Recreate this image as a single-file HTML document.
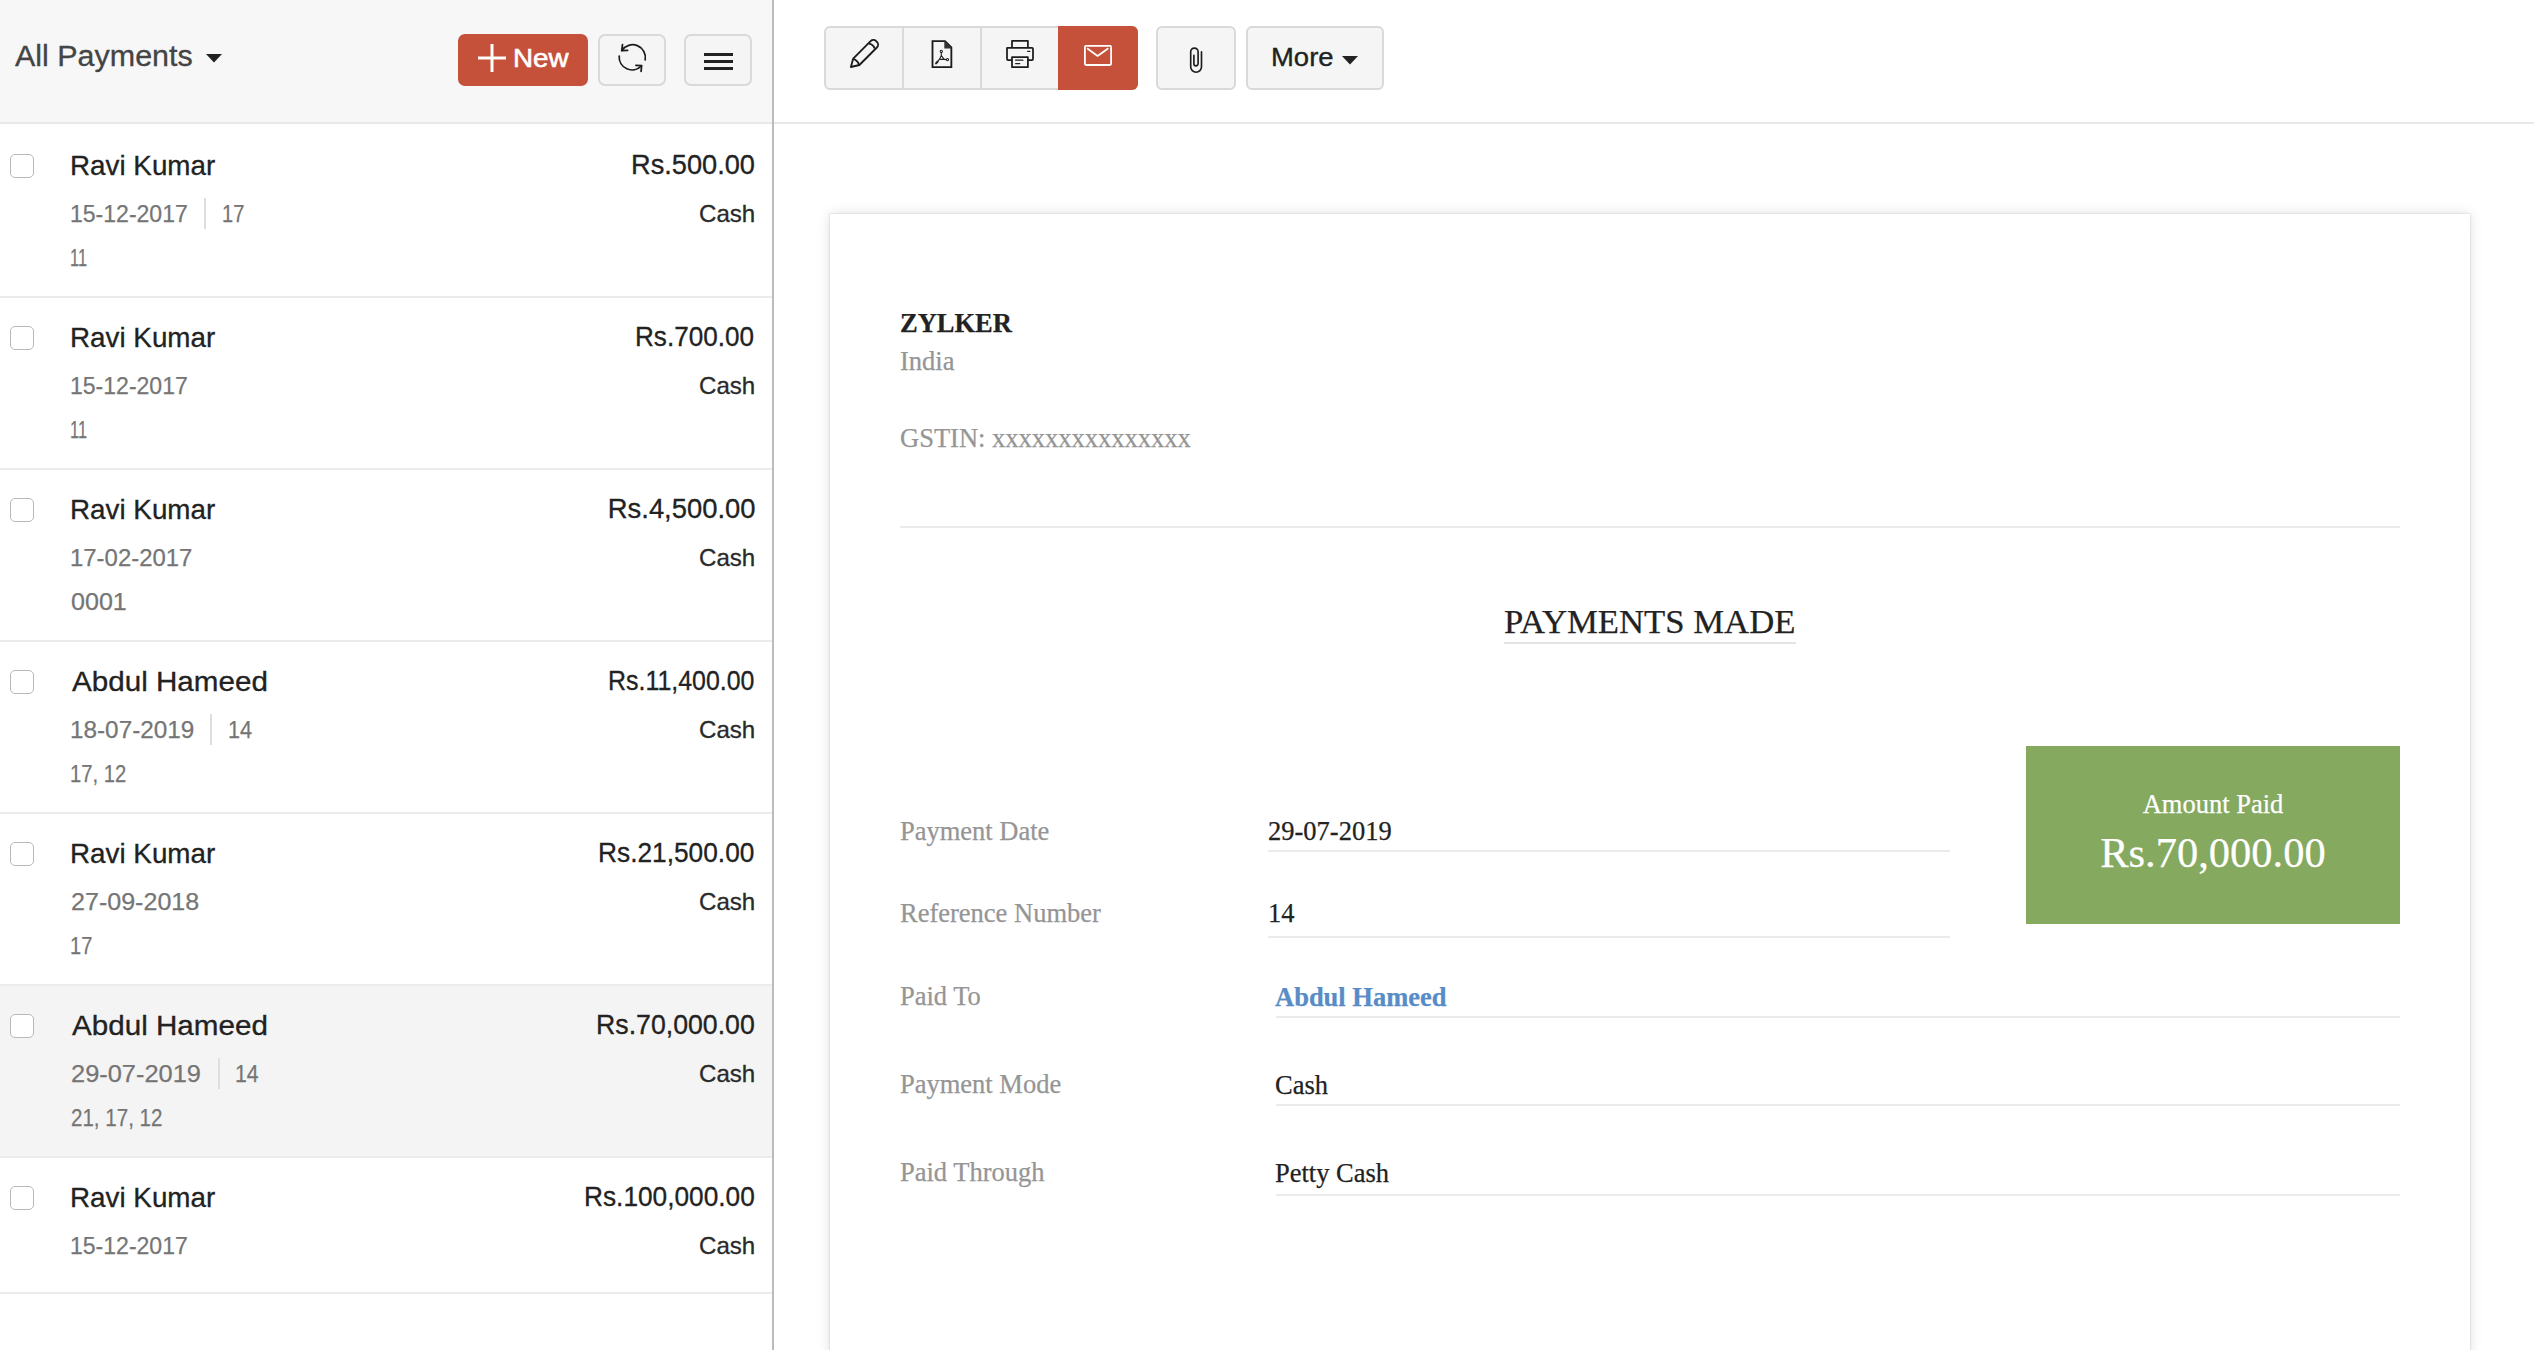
<!DOCTYPE html>
<html><head><meta charset="utf-8">
<style>
*{margin:0;padding:0;box-sizing:border-box}
html,body{width:2534px;height:1350px;overflow:hidden;background:#fff}
body{position:relative;font-family:"Liberation Sans",sans-serif;color:#222}
.a{position:absolute;white-space:nowrap;line-height:1}
.s{font-family:"Liberation Serif",serif;-webkit-text-stroke:0.25px currentColor}
#lhead{position:absolute;left:0;top:0;width:772px;height:122px;background:#f7f7f7}
#hline{position:absolute;left:0;top:122px;width:2534px;height:2px;background:#e8e8e8}
#vline{position:absolute;left:772px;top:0;width:2px;height:1350px;background:#bcbcbc}
.btn{position:absolute;border:2px solid #d9d9d9;border-radius:8px;background:#f5f5f5}
.rowline{position:absolute;left:0;width:772px;height:2px;background:#ebebeb}
.cb{position:absolute;left:10px;width:24px;height:24px;border:1.5px solid #b9b9b9;border-radius:5px;background:#fff}
.nm{font-size:28px;color:#222;-webkit-text-stroke:0.3px #222}
.amt{font-size:27.4px;color:#222;-webkit-text-stroke:0.3px #222}
.dt{font-size:24px;color:#757575;-webkit-text-stroke:0.25px #757575}
.cash{font-size:24px;color:#2a2a2a;-webkit-text-stroke:0.3px #2a2a2a}
.sep{position:absolute;width:1.5px;height:31px;background:#dedede}
.lbl{font-size:26.5px;color:#959595}
.val{font-size:26.5px;color:#222}
.fl{position:absolute;height:2px;background:#ebebeb}
.hdr{font-size:28.8px;color:#444;-webkit-text-stroke:0.3px #444}
.newt{font-size:26.3px;color:#fff;-webkit-text-stroke:0.6px #fff}
.moret{font-size:26.3px;color:#222;-webkit-text-stroke:0.35px #222}

</style></head><body>
<div id="lhead"></div>
<div id="hline"></div>
<div id="vline"></div>

<svg class="a" style="left:206px;top:54px" width="16" height="9" viewBox="0 0 16 9"><path d="M0 0H16L8 8.5Z" fill="#222"/></svg>

<div class="a" style="left:458px;top:34px;width:130px;height:52px;background:#c5513a;border-radius:7px"></div>
<svg class="a" style="left:478px;top:44px" width="28" height="28" viewBox="0 0 28 28"><path d="M14 0V28M0 14H28" stroke="#fff" stroke-width="3"/></svg>

<div class="btn" style="left:598px;top:34px;width:68px;height:52px;border-radius:7px"></div>


<div class="btn" style="left:684px;top:34px;width:68px;height:52px;border-radius:7px"></div>
<div class="a" style="left:704px;top:53px;width:29px;height:3px;background:#222"></div>
<div class="a" style="left:704px;top:60px;width:29px;height:3px;background:#222"></div>
<div class="a" style="left:704px;top:67px;width:29px;height:3px;background:#222"></div>

<div class="btn" style="left:824px;top:26px;width:314px;height:64px;border-radius:6px"></div>
<div class="a" style="left:902px;top:28px;width:2px;height:60px;background:#d9d9d9"></div>
<div class="a" style="left:980px;top:28px;width:2px;height:60px;background:#d9d9d9"></div>
<div class="a" style="left:1058px;top:26px;width:80px;height:64px;background:#c5513a;border-radius:0 6px 6px 0"></div>

<div class="btn" style="left:1156px;top:26px;width:80px;height:64px;border-radius:6px"></div>
<div class="btn" style="left:1246px;top:26px;width:138px;height:64px;border-radius:6px"></div>
<svg class="a" style="left:1342px;top:56px" width="16" height="9" viewBox="0 0 16 9"><path d="M0 0H16L8 8.5Z" fill="#222"/></svg>

<div class="a hdr" id="hdr0" style="left:15.06px;top:41.52px;transform:scaleX(1.0574);transform-origin:0 0">All Payments</div>
<div class="a newt" id="new0" style="left:512.74px;top:45.34px;transform:scaleX(1.0577);transform-origin:0 0">New</div>
<div class="a moret" id="more0" style="left:1271.36px;top:43.54px;transform:scaleX(1.0441);transform-origin:0 0">More</div>
<div class="rowline" style="top:296px"></div>
<div class="cb" style="top:154px"></div>
<div class="a nm" id="nm0" style="left:70.01px;top:152.3px;transform:scaleX(0.9932);transform-origin:0 0">Ravi Kumar</div>
<div class="a amt" id="amt0" style="left:630.71px;top:150.81px;transform:scaleX(0.9927);transform-origin:0 0">Rs.500.00</div>
<div class="a dt" id="dt0" style="left:69.64px;top:201.68px;transform:scaleX(0.9595);transform-origin:0 0">15-12-2017</div>
<div class="sep" style="left:204.05px;top:198px"></div>
<div class="a dt" id="r20" style="left:221.76px;top:201.68px;transform:scaleX(0.8360);transform-origin:0 0">17</div>
<div class="a cash" id="cash0" style="left:699.20px;top:201.68px;transform:scaleX(1.0036);transform-origin:0 0">Cash</div>
<div class="a dt" id="ref0" style="left:69.92px;top:245.68px;transform:scaleX(0.6826);transform-origin:0 0">11</div>
<div class="rowline" style="top:468px"></div>
<div class="cb" style="top:326px"></div>
<div class="a nm" id="nm1" style="left:70.01px;top:324.3px;transform:scaleX(0.9932);transform-origin:0 0">Ravi Kumar</div>
<div class="a amt" id="amt1" style="left:635.05px;top:322.81px;transform:scaleX(0.9532);transform-origin:0 0">Rs.700.00</div>
<div class="a dt" id="dt1" style="left:69.64px;top:373.68px;transform:scaleX(0.9595);transform-origin:0 0">15-12-2017</div>
<div class="a cash" id="cash1" style="left:699.20px;top:373.68px;transform:scaleX(1.0036);transform-origin:0 0">Cash</div>
<div class="a dt" id="ref1" style="left:69.92px;top:417.68px;transform:scaleX(0.6826);transform-origin:0 0">11</div>
<div class="rowline" style="top:640px"></div>
<div class="cb" style="top:498px"></div>
<div class="a nm" id="nm2" style="left:70.01px;top:496.3px;transform:scaleX(0.9932);transform-origin:0 0">Ravi Kumar</div>
<div class="a amt" id="amt2" style="left:607.80px;top:494.81px;transform:scaleX(1.0000);transform-origin:0 0">Rs.4,500.00</div>
<div class="a dt" id="dt2" style="left:69.80px;top:545.68px;transform:scaleX(0.9967);transform-origin:0 0">17-02-2017</div>
<div class="a cash" id="cash2" style="left:699.20px;top:545.68px;transform:scaleX(1.0036);transform-origin:0 0">Cash</div>
<div class="a dt" id="ref2" style="left:70.80px;top:589.68px;transform:scaleX(1.0453);transform-origin:0 0">0001</div>
<div class="rowline" style="top:812px"></div>
<div class="cb" style="top:670px"></div>
<div class="a nm" id="nm3" style="left:71.86px;top:668.3px;transform:scaleX(1.0578);transform-origin:0 0">Abdul Hameed</div>
<div class="a amt" id="amt3" style="left:608.19px;top:666.81px;transform:scaleX(0.9100);transform-origin:0 0">Rs.11,400.00</div>
<div class="a dt" id="dt3" style="left:69.79px;top:717.68px;transform:scaleX(1.0124);transform-origin:0 0">18-07-2019</div>
<div class="sep" style="left:210.05px;top:714px"></div>
<div class="a dt" id="r23" style="left:227.50px;top:717.68px;transform:scaleX(0.9000);transform-origin:0 0">14</div>
<div class="a cash" id="cash3" style="left:699.20px;top:717.68px;transform:scaleX(1.0036);transform-origin:0 0">Cash</div>
<div class="a dt" id="ref3" style="left:69.96px;top:761.68px;transform:scaleX(0.8431);transform-origin:0 0">17, 12</div>
<div class="rowline" style="top:984px"></div>
<div class="cb" style="top:842px"></div>
<div class="a nm" id="nm4" style="left:70.01px;top:840.3px;transform:scaleX(0.9932);transform-origin:0 0">Ravi Kumar</div>
<div class="a amt" id="amt4" style="left:598.24px;top:838.81px;transform:scaleX(0.9599);transform-origin:0 0">Rs.21,500.00</div>
<div class="a dt" id="dt4" style="left:70.85px;top:889.68px;transform:scaleX(1.0443);transform-origin:0 0">27-09-2018</div>
<div class="a cash" id="cash4" style="left:699.20px;top:889.68px;transform:scaleX(1.0036);transform-origin:0 0">Cash</div>
<div class="a dt" id="ref4" style="left:70.02px;top:933.68px;transform:scaleX(0.8340);transform-origin:0 0">17</div>
<div class="a" style="left:0;top:986px;width:772px;height:170px;background:#f4f4f4"></div>
<div class="rowline" style="top:1156px"></div>
<div class="cb" style="top:1014px"></div>
<div class="a nm" id="nm5" style="left:71.86px;top:1012.3px;transform:scaleX(1.0578);transform-origin:0 0">Abdul Hameed</div>
<div class="a amt" id="amt5" style="left:595.83px;top:1010.81px;transform:scaleX(0.9747);transform-origin:0 0">Rs.70,000.00</div>
<div class="a dt" id="dt5" style="left:70.80px;top:1061.68px;transform:scaleX(1.0590);transform-origin:0 0">29-07-2019</div>
<div class="sep" style="left:218.35px;top:1058px"></div>
<div class="a dt" id="r25" style="left:234.62px;top:1061.68px;transform:scaleX(0.8846);transform-origin:0 0">14</div>
<div class="a cash" id="cash5" style="left:699.20px;top:1061.68px;transform:scaleX(1.0036);transform-origin:0 0">Cash</div>
<div class="a dt" id="ref5" style="left:70.80px;top:1105.68px;transform:scaleX(0.8566);transform-origin:0 0">21, 17, 12</div>
<div class="rowline" style="top:1292px"></div>
<div class="cb" style="top:1186px"></div>
<div class="a nm" id="nm6" style="left:70.01px;top:1184.3px;transform:scaleX(0.9932);transform-origin:0 0">Ravi Kumar</div>
<div class="a amt" id="amt6" style="left:584.04px;top:1182.81px;transform:scaleX(0.9588);transform-origin:0 0">Rs.100,000.00</div>
<div class="a dt" id="dt6" style="left:69.64px;top:1233.68px;transform:scaleX(0.9595);transform-origin:0 0">15-12-2017</div>
<div class="a cash" id="cash6" style="left:699.20px;top:1233.68px;transform:scaleX(1.0036);transform-origin:0 0">Cash</div>
<svg class="a" style="left:0;top:0" width="1400" height="100" viewBox="0 0 1400 100" fill="none">
<g stroke="#1c1c1c" stroke-width="1.75" stroke-linejoin="round" stroke-linecap="round">
<path d="M645.2 59.8A12.8 12.8 0 0 0 621.9 50.5"/><path d="M622.5 44.6L621.7 50.7L627.6 50.4"/>
<path d="M619.2 56.1A12.8 12.8 0 0 0 641.3 65.8"/><path d="M635.9 65.4L641.6 65.6L641.1 71.3"/>
</g>
<g stroke="#1c1c1c" stroke-width="1.85" stroke-linejoin="round">
<path d="M850.9 67L853.2 58.6L870.6 41.2C872.2 39.6 874.6 39.6 876.2 41.2L876.9 41.9C878.5 43.5 878.5 45.9 876.9 47.5L859.4 65Z"/>
<path d="M869 43.6Q873.6 44.4 874.6 48.6"/><path d="M853.1 58.9Q857.8 60.2 859 64.9"/>
</g>
<g stroke="#1c1c1c" stroke-width="1.85" stroke-linejoin="miter">
<path d="M932.5 41.05H945L951.35 47.4V67.05H932.5Z"/>
</g>
<path d="M944.3 41V48.5H951.5Z" fill="#333"/>
<g stroke="#222" stroke-width="1.1" stroke-linecap="round" stroke-linejoin="round">
<circle cx="941.3" cy="51.4" r="1.1"/><path d="M941.3 52.5V55.6L939.4 59.4H944.2L941.3 55.6"/><path d="M939.4 59.4L936.3 63"/><path d="M944.2 59.4L946.4 59.6"/><circle cx="947.5" cy="59.6" r="1.1"/>
</g>
<path d="M936.1 63.4L937.6 61.6" stroke="#222" stroke-width="2" stroke-linecap="round"/>
<g stroke="#1c1c1c" stroke-width="1.75" stroke-linejoin="round">
<path d="M1012 47.2V40.8H1027.9V47.2"/>
<path d="M1012 60H1008A1 1 0 0 1 1007 59V48A1 1 0 0 1 1008 47.9H1032A1 1 0 0 1 1033 48.9V59A1 1 0 0 1 1032 60H1027.9"/>
<path d="M1012 57H1027.9V67.2H1012Z"/>
</g>
<g stroke="#222" stroke-width="1.3" stroke-linecap="round">
<path d="M1027.6 51.3H1029.9"/><path d="M1015.6 60.2H1022.9"/><path d="M1015.6 63.6H1019.7"/>
</g>
<g stroke="#fff" stroke-width="1.8" stroke-linejoin="round">
<rect x="1084.9" y="45.8" width="26.2" height="19.2" rx="1.2"/>
<path d="M1087.7 48.8L1097.6 55.9L1107.7 48.8" stroke-linecap="round"/>
</g>
<path d="M1201.5 51.9V66.8A5.4 5.4 0 0 1 1190.7 66.8V51.8A3.7 3.7 0 0 1 1198.1 51.8V63.7A2.1 2.1 0 0 1 1193.9 63.7V55.4" stroke="#1c1c1c" stroke-width="1.65" stroke-linecap="round"/>
</svg>
<div class="a" style="left:830px;top:214px;width:1640px;height:1200px;background:#fff;box-shadow:0 0 0 1px rgba(0,0,0,0.04),0 0 3px rgba(0,0,0,0.05),0 0 12px rgba(0,0,0,0.13)"></div>
<div class="a s" style="left:900px;top:309.5px;font-size:26.5px;font-weight:bold;color:#222">ZYLKER</div>
<div class="a s lbl" style="left:900px;top:347.5px">India</div>
<div class="a s lbl" style="left:900px;top:424.5px">GSTIN: xxxxxxxxxxxxxxx</div>
<div class="fl" style="left:900px;top:526px;width:1500px"></div>
<div class="a s" style="left:1504px;top:605px;font-size:34.7px;color:#222">PAYMENTS MADE</div>
<div class="fl" style="left:1504px;top:642px;width:292px;background:#e3e3e3"></div>
<div class="a" style="left:2026px;top:746px;width:374px;height:178px;background:#84a95f"></div>
<div class="a s" style="left:2026px;top:791px;width:374px;text-align:center;font-size:26.5px;color:#fff">Amount Paid</div>
<div class="a s" style="left:2026px;top:832px;width:374px;text-align:center;font-size:42.5px;color:#fff">Rs.70,000.00</div>

<div class="a s lbl" style="left:900px;top:818px">Payment Date</div>
<div class="a s val" style="left:1268px;top:818px">29-07-2019</div>
<div class="fl" style="left:1268px;top:850px;width:682px"></div>
<div class="a s lbl" style="left:900px;top:900px">Reference Number</div>
<div class="a s val" style="left:1268px;top:900px">14</div>
<div class="fl" style="left:1268px;top:936px;width:682px"></div>
<div class="a s lbl" style="left:900px;top:983px">Paid To</div>
<div class="a s val" style="left:1275px;top:983.8px;font-weight:bold;color:#588cc6">Abdul Hameed</div>
<div class="fl" style="left:1276px;top:1016px;width:1124px"></div>
<div class="a s lbl" style="left:900px;top:1071px">Payment Mode</div>
<div class="a s val" style="left:1275px;top:1071.5px">Cash</div>
<div class="fl" style="left:1276px;top:1104px;width:1124px"></div>
<div class="a s lbl" style="left:900px;top:1159px">Paid Through</div>
<div class="a s val" style="left:1275px;top:1159.5px">Petty Cash</div>
<div class="fl" style="left:1276px;top:1194px;width:1124px"></div>

</body></html>
